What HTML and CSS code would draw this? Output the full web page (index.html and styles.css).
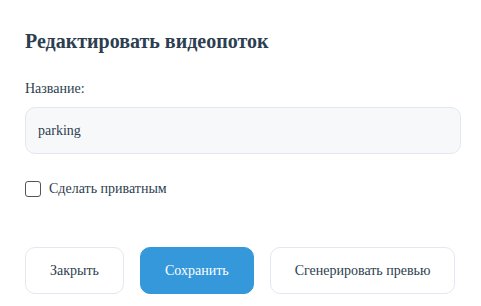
FILE: index.html
```html
<!DOCTYPE html>
<html lang="ru">
<head>
    <meta charset="UTF-8">
    <meta name="viewport" content="width=device-width, initial-scale=1.0">
    <title>Редактировать видеопоток</title>
    <link rel="stylesheet" href="styles.css">
</head>
<body>
    <div class="modal">
        <h2 class="modal-title">Редактировать видеопоток</h2>

        <label class="field-label" for="streamName">Название:</label>
        <input class="text-input" id="streamName" type="text" value="parking">

        <label class="check-row">
            <input type="checkbox" class="check-box">
            <span>Сделать приватным</span>
        </label>

        <div class="actions">
            <button class="btn">Закрыть</button>
            <button class="btn btn-primary">Сохранить</button>
            <button class="btn">Сгенерировать превью</button>
        </div>
    </div>
</body>
</html>
```

FILE: styles.css
```css
:root {
    --text-color: #2c3e50;
    --border-color: #e2e8f0;
    --primary-color: #3498db;
    --serif: "Liberation Serif", "Times New Roman", serif;
}

body {
    margin: 0;
    font-family: var(--serif);
    color: var(--text-color);
    background: #fff;
}

.modal {
    padding: 29px 20px 0 25px;
}

.modal-title {
    margin: 0 0 27px;
    font-family: var(--serif);
    font-size: 20px;
    line-height: 24px;
    font-weight: bold;
}

.field-label {
    display: block;
    font-family: var(--serif);
    font-size: 14px;
    line-height: 18px;
    margin-bottom: 9px;
}

.text-input {
    display: block;
    box-sizing: border-box;
    width: 100%;
    height: 47px;
    padding: 0 12px;
    font-family: var(--serif);
    font-size: 14px;
    color: var(--text-color);
    background: #f7f8fa;
    border: 1px solid var(--border-color);
    border-radius: 10px;
    outline: none;
}

.check-row {
    display: flex;
    align-items: center;
    gap: 8px;
    margin-top: 27px;
    font-family: var(--serif);
    font-size: 14px;
    line-height: 16px;
}

.check-box {
    appearance: none;
    box-sizing: border-box;
    width: 16px;
    height: 16px;
    margin: 0;
    border: 1.5px solid #555;
    border-radius: 3px;
    background: #fff;
}

.actions {
    display: flex;
    gap: 16px;
    margin-top: 50px;
}

.btn {
    box-sizing: border-box;
    height: 47px;
    padding: 0 24px;
    font-family: var(--serif);
    font-size: 14px;
    white-space: nowrap;
    color: var(--text-color);
    background: #fff;
    border: 1px solid var(--border-color);
    border-radius: 10px;
    cursor: pointer;
}

.btn-primary {
    color: #fff;
    background: var(--primary-color);
    border-color: var(--primary-color);
}
```
